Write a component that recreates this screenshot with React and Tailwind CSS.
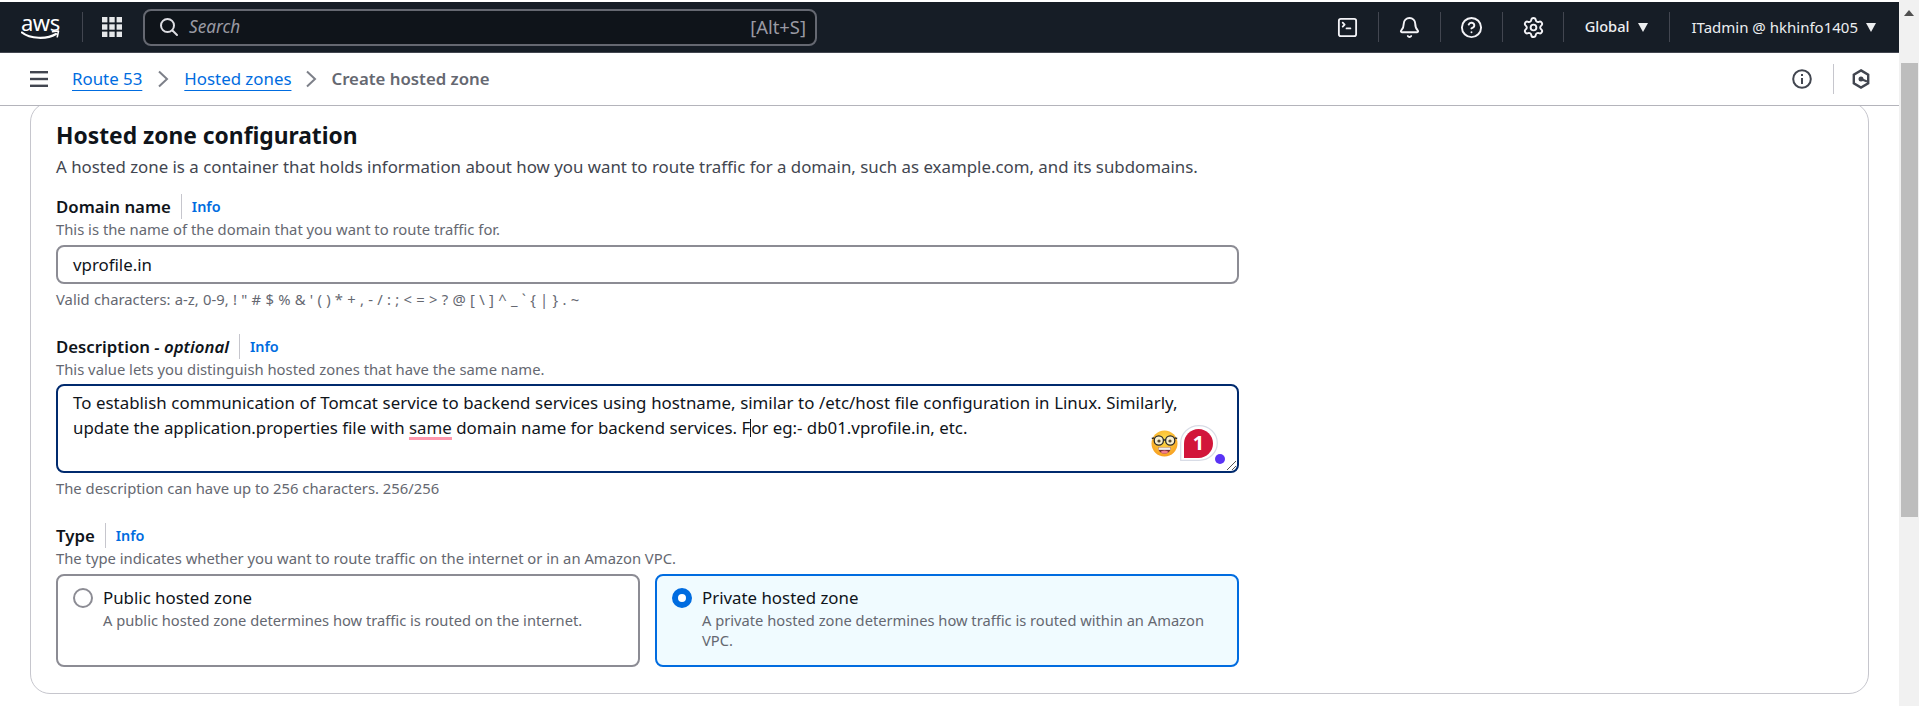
import React from "react";
import { Settings, Bell, CircleHelp, SquareTerminal } from "lucide-react";

const Sep = () => <div className="w-px h-[30px] bg-[#424650]" />;

function AwsLogo() {
  return (
    <div className="relative w-[40px] h-[30px] ml-[21px] text-white">
      <span className="block text-[22px] leading-[22px] text-center tracking-[-0.5px] mt-[-1px] pr-[2px]">aws</span>
      <svg className="absolute left-0 top-[15px]" width="40" height="15" viewBox="0 0 40 15" fill="none">
        <path d="M1 5.500C9 12 26 12.500 35 7" stroke="#fff" strokeWidth="2.200" strokeLinecap="round" />
        <path d="M31.500 4.800l6-.8-1.200 5.800" stroke="#fff" strokeWidth="1.600" strokeLinecap="round" strokeLinejoin="round" />
      </svg>
    </div>
  );
}

function Grid() {
  return (
    <svg width="20" height="20" viewBox="0 0 20 20" fill="#e6e8ea">
      {[0, 7.3, 14.6].flatMap((y) => [0, 7.3, 14.6].map((x) => <rect key={x + "-" + y} x={x} y={y} width="5.400" height="5.400" />))}
    </svg>
  );
}

function Caret() {
  return (
    <svg width="10" height="9" viewBox="0 0 10 9" fill="#eceef0" className="block"><path d="M0 0h10L5 9z" /></svg>
  );
}

function Chevron() {
  return (
    <svg width="12" height="18" viewBox="0 0 12 18" fill="none" stroke="#7d8089" strokeWidth="2"><path d="M2 1.500L10 9l-8 7.500" /></svg>
  );
}

function Label({ title, optional, mt }) {
  return (
    <div className={`flex items-center h-[25px] ${mt}`}>
      <span className="text-[16.8px] font-semibold text-[#0f141a] leading-[25px] pr-[10px] border-r border-[#c6c6cd]">
        {title}
        {optional && <i className="font-semibold"> - optional</i>}
      </span>
      <a className="text-[14.4px] font-semibold text-[#006ce0] pl-[10px]">Info</a>
    </div>
  );
}

function Hint({ children, cls }) {
  return <p className={`text-[14.8px] leading-[18px] text-[#656871] ${cls}`}>{children}</p>;
}

function Tile({ selected, title, desc }) {
  return (
    <div
      className={`flex-1 h-[93px] rounded-lg border-2 pl-[15px] pr-[16px] pt-[10px] flex gap-[10px] ${
        selected ? "border-[#006ce0] bg-[#f0fbff]" : "border-[#8c8c94] bg-white"
      }`}
    >
      {selected ? (
        <div className="w-[20px] h-[20px] rounded-full border-[6px] border-[#006ce0] bg-white shrink-0 mt-[2px]" />
      ) : (
        <div className="w-[20px] h-[20px] rounded-full border-2 border-[#8c8c94] bg-white shrink-0 mt-[2px]" />
      )}
      <div>
        <div className="text-[16.85px] leading-[24px] text-[#0f141a]">{title}</div>
        <div className="text-[14.7px] leading-[20px] text-[#656871]">{desc}</div>
      </div>
    </div>
  );
}

function NerdFace() {
  return (
    <svg width="27" height="27" viewBox="0 0 27 27">
      <defs>
        <radialGradient id="nf" cx="50%" cy="35%" r="70%">
          <stop offset="0%" stopColor="#ffe14d" />
          <stop offset="100%" stopColor="#f79a1d" />
        </radialGradient>
      </defs>
      <circle cx="13.500" cy="13.500" r="13" fill="url(#nf)" />
      <circle cx="7.800" cy="10.500" r="4.600" fill="#f6efd0" stroke="#2a2a2a" strokeWidth="1.300" />
      <circle cx="19.200" cy="10.500" r="4.600" fill="#f6efd0" stroke="#2a2a2a" strokeWidth="1.300" />
      <path d="M12 10h3M0.800 8.500l2.500-.6M26.200 8.500l-2.500-.6" stroke="#2a2a2a" strokeWidth="1.300" />
      <circle cx="8" cy="11" r="1.600" fill="#5a4a30" />
      <circle cx="19" cy="11" r="1.600" fill="#5a4a30" />
      <path d="M7 17.500h13c-.6 4-3 6-6.500 6S7.600 21.500 7 17.500z" fill="#7a2b32" />
      <path d="M7.500 17.500h12v2.400h-12z" fill="#eee" />
      <ellipse cx="13.500" cy="22" rx="3.400" ry="1.500" fill="#f27d8a" />
    </svg>
  );
}

function Badge() {
  return (
    <div className="absolute left-[1122px] top-[39px] w-[38px] h-[36px]">
      <svg width="38" height="36" viewBox="0 0 38 36" className="absolute inset-0">
        <path d="M.7 35.300V18C.7 8.300 8.800.7 19 .7S37.300 8.300 37.300 18 29.200 35.300 19 35.300z" fill="#fff" stroke="#d8dce6" strokeWidth="1.200" />
        <path d="M4 33V18.500C4 10.500 10.500 4 18.500 4S33 10.500 33 18.500 26.500 33 18.500 33z" fill="#d2153a" />
      </svg>
      <span className="absolute left-[4px] w-[29px] top-[6px] text-center text-[20px] leading-[24px] font-bold text-white">1</span>
      <div className="absolute left-[35px] top-[29px] w-[10px] h-[10px] rounded-full bg-[#5a33f5]" />
    </div>
  );
}

export default function App() {
  return (
    <div className="flex h-[706px] w-[1919px] overflow-hidden bg-white" style={{ fontFamily: '"Noto Sans", sans-serif' }}>
      <div className="w-[1899px] flex flex-col">
        <header className="h-[51px] mt-[2px] shrink-0 bg-[#161d26] border-b border-[#424650] flex items-center">
          <AwsLogo />
          <div className="w-px h-[30px] bg-[#424650] ml-[21px]" />
          <div className="ml-[19px]"><Grid /></div>
          <div className="ml-[21px] w-[674px] h-[37px] rounded-lg border-2 border-[#656871] bg-[#0f141a] flex items-center pl-[14px] pr-[9px]">
            <svg width="20" height="20" viewBox="0 0 20 20" fill="none" stroke="#dedee3" strokeWidth="2" strokeLinecap="round"><circle cx="8.500" cy="8.500" r="6.500" /><path d="M13.500 13.500L18 18" /></svg>
            <span className="ml-[10px] italic text-[17.2px] text-[#9a9aa3]">Search</span>
            <span className="ml-auto text-[18.4px] text-[#9a9aa3]">[Alt+S]</span>
          </div>
          <div className="ml-auto flex items-center text-[#eceef0]">
            <SquareTerminal size={23} strokeWidth={1.900} color="#f3f3f7" />
            <div className="ml-[19px]"><Sep /></div>
            <div className="ml-[19px]"><Bell size={23} strokeWidth={2} color="#f3f3f7" /></div>
            <div className="ml-[19px]"><Sep /></div>
            <div className="ml-[19px]"><CircleHelp size={23} strokeWidth={2} color="#f3f3f7" /></div>
            <div className="ml-[19px]"><Sep /></div>
            <div className="ml-[19px]"><Settings size={23} strokeWidth={2} color="#f3f3f7" /></div>
            <div className="ml-[18px]"><Sep /></div>
            <span className="ml-[21px] text-[14.6px] font-medium">Global</span>
            <span className="ml-[9px]"><Caret /></span>
            <div className="ml-[21px]"><Sep /></div>
            <span className="ml-[21px] text-[15px]">ITadmin @ hkhinfo1405</span>
            <span className="ml-[8px] mr-[23px]"><Caret /></span>
          </div>
        </header>

        <nav className="h-[53px] shrink-0 bg-white border-b border-[#b4b4bb] flex items-center">
          <svg className="ml-[30px]" width="18" height="16" viewBox="0 0 18 16" fill="#424650"><rect y="0" width="18" height="2.400" /><rect y="6.800" width="18" height="2.400" /><rect y="13.600" width="18" height="2.400" /></svg>
          <a className="ml-[24px] text-[#006ce0] text-[16.85px] underline underline-offset-[5px]">Route 53</a>
          <span className="ml-[15px]"><Chevron /></span>
          <a className="ml-[15px] text-[#006ce0] text-[16.85px] underline underline-offset-[5px]">Hosted zones</a>
          <span className="ml-[14px]"><Chevron /></span>
          <span className="ml-[14px] text-[16.8px] font-semibold text-[#656871]">Create hosted zone</span>
          <div className="ml-auto flex items-center">
            <svg width="20" height="20" viewBox="0 0 20 20" fill="none" stroke="#424650" strokeWidth="2"><circle cx="10" cy="10" r="8.800" /><path d="M10 9v6M10 5v2" /></svg>
            <div className="w-px h-[30px] bg-[#c6c6cd] ml-[21px]" />
            <svg className="ml-[18px] mr-[29px]" width="18" height="20" viewBox="0 0 18 20" fill="none" stroke="#424650" strokeWidth="2.400"><path d="M9 1.400l7.200 4.200v8.800L9 18.600l-7.200-4.200V5.600z" /><circle cx="9" cy="10" r="2.500" fill="#424650" stroke="none" /><path d="M9 10l6 2.500" strokeWidth="2" /></svg>
          </div>
        </nav>

        <main className="flex-1 overflow-hidden pl-[30px]">
          <section className="-mt-[4px] h-[592px] w-[1839px] rounded-[20px] border border-[#c6c6cd] pl-[25px] pt-[18px]">
            <h2 className="text-[22.8px] leading-[30px] font-bold text-[#0f141a]">Hosted zone configuration</h2>
            <p className="text-[16.85px] leading-[24px] text-[#424650] mt-[4px]">A hosted zone is a container that holds information about how you want to route traffic for a domain, such as example.com, and its subdomains.</p>

            <div className="w-[1183px]">
              <Label title="Domain name" mt="mt-[15px]" />
              <Hint cls="mt-[1px]">This is the name of the domain that you want to route traffic for.</Hint>
              <div className="mt-[7px] h-[39px] rounded-lg border-2 border-[#8c8c94] pl-[15px] flex items-center text-[16.85px] text-[#0f141a]">vprofile.in</div>
              <Hint cls="mt-[6px] [word-spacing:0.43px]">Valid characters: a-z, 0-9, ! " # $ % &amp; ' ( ) * + , - / : ; &lt; = &gt; ? @ [ \ ] ^ _ ` {"{"} | {"}"} . ~</Hint>

              <Label title="Description" optional mt="mt-[26px]" />
              <Hint cls="mt-[1px]">This value lets you distinguish hosted zones that have the same name.</Hint>
              <div className="relative mt-[6px] h-[89px] rounded-lg border-2 border-[#002a6e] pl-[15px] pr-[30px] pt-[4px] text-[16.85px] leading-[25px] text-[#0f141a] whitespace-nowrap">
                <div className="[word-spacing:0.3px]">To establish communication of Tomcat service to backend services using hostname, similar to /etc/host file configuration in Linux. Similarly,</div>
                <div>
                  update the application.properties file with{" "}
                  <span className="relative">same<span className="absolute left-0 right-0 top-[21px] h-[3px] bg-[#ff97ac]" /></span> domain name for backend services. F
                  <span className="inline-block w-px h-[18px] bg-[#0f141a] align-[-3px]" />
                  or eg:- db01.vprofile.in, etc.
                </div>
                <div className="absolute left-[1093px] top-[44px]"><NerdFace /></div>
                <Badge />
                <svg className="absolute right-0 bottom-0" width="11" height="11" viewBox="0 0 11 11" stroke="#555" strokeWidth="1" fill="none"><path d="M1 10L10 1M6 10l4-4" /></svg>
              </div>
              <Hint cls="mt-[6px]">The description can have up to 256 characters. 256/256</Hint>

              <Label title="Type" mt="mt-[26px]" />
              <Hint cls="mt-[1px]">The type indicates whether you want to route traffic on the internet or in an Amazon VPC.</Hint>
              <div className="mt-[7px] flex gap-[15px]">
                <Tile title="Public hosted zone" desc="A public hosted zone determines how traffic is routed on the internet." />
                <Tile selected title="Private hosted zone" desc="A private hosted zone determines how traffic is routed within an Amazon VPC." />
              </div>
            </div>
          </section>
        </main>
      </div>

      <div className="w-[20px] bg-[#f1f1f1] flex flex-col shrink-0">
        <div className="h-[20px] mt-[3px] flex items-center justify-center">
          <svg width="10" height="6" viewBox="0 0 10 6" fill="#505050"><path d="M5 0l5 6H0z" /></svg>
        </div>
        <div className="ml-[2px] w-[17px] h-[454px] mt-[40px] bg-[#bdbdbd]" />
      </div>
    </div>
  );
}
